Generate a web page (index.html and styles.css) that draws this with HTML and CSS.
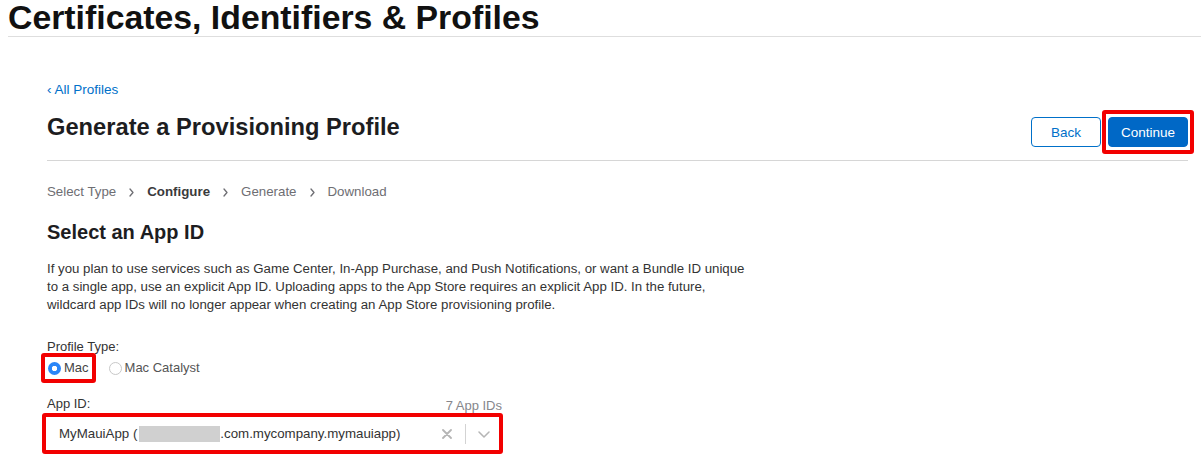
FILE: index.html
```html
<!DOCTYPE html>
<html lang="en">
<head>
<meta charset="utf-8">
<title>Certificates, Identifiers &amp; Profiles</title>
<link rel="stylesheet" href="styles.css">
</head>
<body>
<header class="site-header">
  <h1 class="site-title">Certificates, Identifiers &amp; Profiles</h1>
</header>
<main class="content">
  <a class="back-link" href="#">&lsaquo; All Profiles</a>
  <div class="page-head">
    <h2 class="page-title">Generate a Provisioning Profile</h2>
    <div class="actions">
      <button class="btn btn-secondary" type="button">Back</button>
      <span class="highlight highlight-btn"><button class="btn btn-primary" type="button">Continue</button></span>
    </div>
  </div>
  <nav class="steps">
    <span class="step">Select Type</span>
    <svg class="step-sep" width="5" height="9" viewBox="0 0 5 9"><path d="M1 1l3 3.5L1 8" fill="none" stroke="#6e6e73" stroke-width="1.3" stroke-linecap="round" stroke-linejoin="round"/></svg>
    <span class="step step-current">Configure</span>
    <svg class="step-sep" width="5" height="9" viewBox="0 0 5 9"><path d="M1 1l3 3.5L1 8" fill="none" stroke="#6e6e73" stroke-width="1.3" stroke-linecap="round" stroke-linejoin="round"/></svg>
    <span class="step">Generate</span>
    <svg class="step-sep" width="5" height="9" viewBox="0 0 5 9"><path d="M1 1l3 3.5L1 8" fill="none" stroke="#6e6e73" stroke-width="1.3" stroke-linecap="round" stroke-linejoin="round"/></svg>
    <span class="step">Download</span>
  </nav>
  <section class="form-section">
    <h3 class="section-title">Select an App ID</h3>
    <p class="intro">If you plan to use services such as Game Center, In-App Purchase, and Push Notifications, or want a Bundle ID unique to a single app, use an explicit App ID. Uploading apps to the App Store requires an explicit App ID. In the future, wildcard app IDs will no longer appear when creating an App Store provisioning profile.</p>
    <div class="field">
      <div class="field-label">Profile Type:</div>
      <div class="radio-row">
        <span class="highlight highlight-radio">
          <label class="radio"><span class="radio-dot checked"></span>Mac</label>
        </span>
        <label class="radio radio-catalyst"><span class="radio-dot"></span>Mac Catalyst</label>
      </div>
    </div>
    <div class="field field-app">
      <div class="field-head">
        <span class="field-label-inline">App ID:</span>
        <span class="count">7 App IDs</span>
      </div>
      <div class="highlight highlight-select">
        <div class="select">
          <span class="select-value">MyMauiApp (<span class="redacted"></span>.com.mycompany.mymauiapp)</span>
          <span class="select-indicators">
            <svg class="clear-icon" width="10" height="10" viewBox="0 0 10 10"><path d="M1 1l8 8M9 1L1 9" stroke="#b5b5b5" stroke-width="1.8" stroke-linecap="round"/></svg>
            <span class="indicator-sep"></span>
            <svg class="chevron-icon" width="12" height="7" viewBox="0 0 12 7"><path d="M1 1l5 5 5-5" fill="none" stroke="#b5b5b5" stroke-width="1.5" stroke-linecap="round" stroke-linejoin="round"/></svg>
          </span>
        </div>
      </div>
    </div>
  </section>
</main>
</body>
</html>
```

FILE: styles.css
```css
* {
  box-sizing: border-box;
}

body {
  margin: 0;
  background: #ffffff;
  color: #333333;
  font-family: "Liberation Sans", Arial, sans-serif;
  font-size: 13px;
  line-height: 18px;
}

.site-header {
  margin-left: 8px;
  padding-bottom: 2px;
  border-bottom: 1px solid #dedede;
}

.site-title {
  margin: 0;
  font-size: 33.8px;
  line-height: 34px;
  font-weight: 700;
  color: #111111;
}

.content {
  margin: 0 13px 0 47px;
}

.back-link {
  display: block;
  width: fit-content;
  margin-top: 44px;
  color: #0070c9;
  text-decoration: none;
  font-size: 13.5px;
  line-height: 18px;
}

.page-head {
  display: flex;
  justify-content: space-between;
  align-items: flex-start;
  margin-top: 11px;
  padding-bottom: 6px;
  border-bottom: 1px solid #d6d6d6;
}

.page-title {
  margin: 2px 0 0;
  font-size: 23.7px;
  line-height: 30px;
  font-weight: 700;
  color: #1d1d1f;
}

.actions {
  display: flex;
  align-items: center;
  gap: 1px;
  margin-right: -6px;
}

.btn {
  height: 30px;
  padding: 0;
  border-radius: 4px;
  font-family: "Liberation Sans", Arial, sans-serif;
  font-size: 13.5px;
  cursor: pointer;
}

.btn-secondary {
  width: 70px;
  border: 1px solid #0070c9;
  background: #ffffff;
  color: #0070c9;
}

.btn-primary {
  width: 80px;
  border: 1px solid #0068c6;
  background: #0068c6;
  color: #ffffff;
}

.highlight {
  border: 4px solid #f20000;
  border-radius: 3px;
}

.highlight-btn {
  display: flex;
  padding: 3px 2px;
}

.steps {
  display: flex;
  align-items: center;
  gap: 13px;
  margin-top: 22px;
  color: #6e6e73;
  font-size: 13.3px;
  line-height: 18px;
}

.step-current {
  font-weight: 700;
  color: #3a3a3c;
}

.section-title {
  margin: 19px 0 0;
  font-size: 20px;
  line-height: 24px;
  font-weight: 700;
  color: #1d1d1f;
}

.intro {
  margin: 16px 0 0;
  max-width: 709px;
  font-size: 13.25px;
  color: #333333;
}

.field-label {
  margin-top: 24px;
  color: #333333;
}

.radio-row {
  display: flex;
  align-items: center;
  height: 18px;
  margin-top: 3px;
}

.highlight-radio {
  display: flex;
  padding: 2px 3px;
  margin: -6px 0 -6px -6px;
}

.radio {
  display: flex;
  align-items: center;
  gap: 3px;
  color: #444444;
}

.radio-catalyst {
  margin-left: 13px;
  color: #555555;
}

.radio-dot {
  width: 13px;
  height: 13px;
  border-radius: 50%;
  border: 1px solid #c8c8c8;
  background: #ffffff;
}

.radio-dot.checked {
  border: none;
  background: radial-gradient(circle, #ffffff 0 2.4px, #2a86f8 3px);
}

.field-app {
  margin-top: 18px;
}

.field-head {
  display: flex;
  justify-content: space-between;
  align-items: flex-end;
  width: 455px;
}

.count {
  font-size: 13px;
  line-height: 15px;
  color: #86868b;
}

.highlight-select {
  width: 461px;
  margin-left: -5px;
}

.select {
  display: flex;
  align-items: center;
  height: 33px;
  padding: 0 9px 0 13px;
  background: #ffffff;
}

.select-value {
  display: flex;
  align-items: center;
  font-size: 13.3px;
  color: #333333;
}

.redacted {
  display: inline-block;
  width: 81px;
  height: 16px;
  margin-left: 2px;
  background: #d0d0d0;
}

.select-indicators {
  display: flex;
  align-items: center;
  margin-left: auto;
}

.clear-icon {
  display: block;
}

.indicator-sep {
  width: 1px;
  height: 20px;
  margin: 0 12px 0 13px;
  background: #d3d3d3;
}

.chevron-icon {
  display: block;
  margin-top: 2px;
}
```
